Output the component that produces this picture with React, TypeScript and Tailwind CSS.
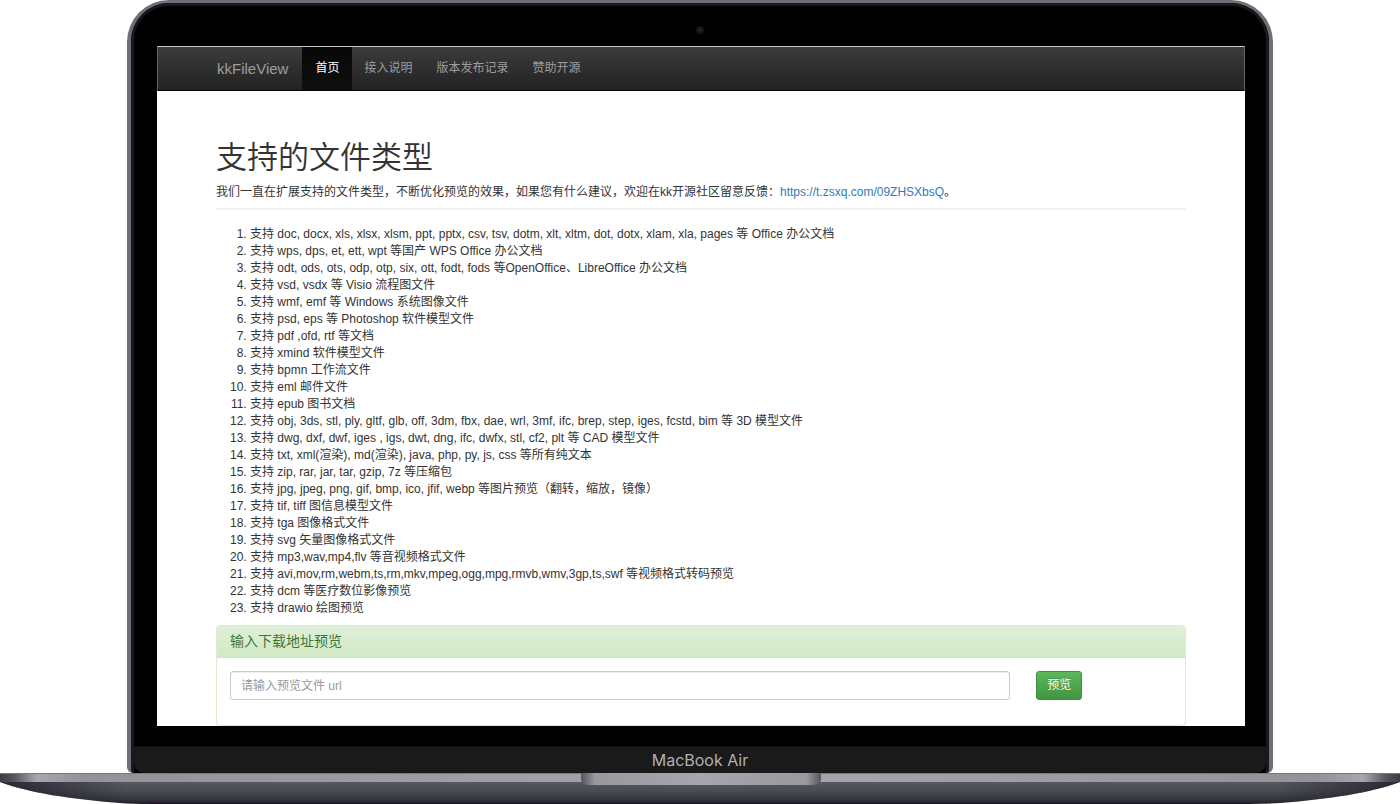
const navItems = ["首页", "接入说明", "版本发布记录", "赞助开源"];

const fileTypes = [
  "支持 doc, docx, xls, xlsx, xlsm, ppt, pptx, csv, tsv, dotm, xlt, xltm, dot, dotx, xlam, xla, pages 等 Office 办公文档",
  "支持 wps, dps, et, ett, wpt 等国产 WPS Office 办公文档",
  "支持 odt, ods, ots, odp, otp, six, ott, fodt, fods 等OpenOffice、LibreOffice 办公文档",
  "支持 vsd, vsdx 等 Visio 流程图文件",
  "支持 wmf, emf 等 Windows 系统图像文件",
  "支持 psd, eps 等 Photoshop 软件模型文件",
  "支持 pdf ,ofd, rtf 等文档",
  "支持 xmind 软件模型文件",
  "支持 bpmn 工作流文件",
  "支持 eml 邮件文件",
  "支持 epub 图书文档",
  "支持 obj, 3ds, stl, ply, gltf, glb, off, 3dm, fbx, dae, wrl, 3mf, ifc, brep, step, iges, fcstd, bim 等 3D 模型文件",
  "支持 dwg, dxf, dwf, iges , igs, dwt, dng, ifc, dwfx, stl, cf2, plt 等 CAD 模型文件",
  "支持 txt, xml(渲染), md(渲染), java, php, py, js, css 等所有纯文本",
  "支持 zip, rar, jar, tar, gzip, 7z 等压缩包",
  "支持 jpg, jpeg, png, gif, bmp, ico, jfif, webp 等图片预览（翻转，缩放，镜像）",
  "支持 tif, tiff 图信息模型文件",
  "支持 tga 图像格式文件",
  "支持 svg 矢量图像格式文件",
  "支持 mp3,wav,mp4,flv 等音视频格式文件",
  "支持 avi,mov,rm,webm,ts,rm,mkv,mpeg,ogg,mpg,rmvb,wmv,3gp,ts,swf 等视频格式转码预览",
  "支持 dcm 等医疗数位影像预览",
  "支持 drawio 绘图预览",
];

function Navbar() {
  return (
    <nav className="flex h-[45px] border border-t-[#c8c8c8] border-x-[#666666] border-b-[#080808] bg-linear-to-b from-[#3c3c3c] to-[#222222] pl-[59px] text-[#9d9d9d]">
      <a href="#home" className="flex items-center pr-[14px] text-[15px]">
        kkFileView
      </a>
      <ul className="flex">
        {navItems.map((item, i) => (
          <li key={item} className="flex">
            <a
              href={"#" + item}
              className={
                i === 0
                  ? "flex items-center bg-linear-to-b from-[#080808] to-[#0f0f0f] px-[13px] text-white"
                  : "flex items-center px-3"
              }
            >
              {item}
            </a>
          </li>
        ))}
      </ul>
    </nav>
  );
}

function PreviewPanel() {
  return (
    <section className="mt-2 rounded-[4px] border border-[#deebd2] shadow-[0_1px_2px_rgba(0,0,0,0.05)]">
      <h2 className="rounded-t-[3px] border-b border-[#d6e9c6] bg-linear-to-b from-[#dff0d8] to-[#d0e9c6] px-[13px] text-[14px] leading-[31px] text-[#3c763d]">
        输入下载地址预览
      </h2>
      <form className="flex gap-[26px] pt-[13px] pr-[15px] pb-[25px] pl-[13px]" onSubmit={(e) => e.preventDefault()}>
        <input
          type="text"
          aria-label="预览文件 url"
          placeholder="请输入预览文件 url"
          className="h-[29px] w-[83%] rounded-[3px] border border-[#cccccc] px-[10px] text-[12px] shadow-[inset_0_1px_1px_rgba(0,0,0,0.075)] outline-none placeholder:text-[#999999]"
        />
        <button
          type="submit"
          className="h-[29px] rounded-[3px] border border-[#3e8f3e] bg-linear-to-b from-[#5cb85c] to-[#419641] px-[10px] text-[12px] text-white [text-shadow:0_-1px_0_rgba(0,0,0,0.2)]"
        >
          预览
        </button>
      </form>
    </section>
  );
}

function LaptopBase() {
  return (
    <svg
      className="block h-[31px] w-full"
      viewBox="0 0 1400 31"
      preserveAspectRatio="none"
      aria-hidden="true"
    >
      <defs>
        <linearGradient id="edge" x1="0" x2="1" y1="0" y2="0">
          <stop offset="0" stopColor="#3c3d43" />
          <stop offset="0.01" stopColor="#55565c" />
          <stop offset="0.026" stopColor="#a6a7ac" />
          <stop offset="0.06" stopColor="#929398" />
          <stop offset="0.4" stopColor="#a0a1a6" />
          <stop offset="0.6" stopColor="#a3a4a9" />
          <stop offset="0.94" stopColor="#929398" />
          <stop offset="0.974" stopColor="#a6a7ac" />
          <stop offset="0.99" stopColor="#55565c" />
          <stop offset="1" stopColor="#3c3d43" />
        </linearGradient>
        <linearGradient id="belly" x1="0" x2="0" y1="0" y2="1">
          <stop offset="0" stopColor="#5a5b61" />
          <stop offset="0.45" stopColor="#494a52" />
          <stop offset="0.8" stopColor="#34353f" />
          <stop offset="1" stopColor="#1c1c27" />
        </linearGradient>
        <linearGradient id="corner" x1="0" x2="1" y1="0" y2="0">
          <stop offset="0" stopColor="#1c1d25" stopOpacity="0.8" />
          <stop offset="0.09" stopColor="#1c1d25" stopOpacity="0" />
          <stop offset="0.91" stopColor="#1c1d25" stopOpacity="0" />
          <stop offset="1" stopColor="#1c1d25" stopOpacity="0.8" />
        </linearGradient>
        <linearGradient id="notch" x1="0" x2="1" y1="0" y2="0">
          <stop offset="0" stopColor="#55565b" />
          <stop offset="0.06" stopColor="#999a9e" />
          <stop offset="0.5" stopColor="#a5a6ab" />
          <stop offset="0.94" stopColor="#999a9e" />
          <stop offset="1" stopColor="#55565b" />
        </linearGradient>
      </defs>
      <path d="M0 8H1400V9C1370 20 1330 26 1280 30Q1268 31 1250 31H150Q132 31 120 30C70 26 30 20 0 9Z" fill="url(#belly)" />
      <path d="M0 8H1400V9C1370 20 1330 26 1280 30Q1268 31 1250 31H150Q132 31 120 30C70 26 30 20 0 9Z" fill="url(#corner)" />
      <path d="M0 0H1400V9H0Z" fill="url(#edge)" />
      <path d="M0 0H1400V1H0Z" fill="#77787d" />
      <path d="M581 0H821V7Q820 12 811 12H591Q582 12 581 7Z" fill="url(#notch)" />
      <path d="M150 30H1250V31H150Z" fill="#1b111e" />
    </svg>
  );
}

export default function App() {
  return (
    <div className="bg-white font-['Liberation_Sans','Noto_Sans_CJK_SC',sans-serif] text-[12px] leading-[17px] text-[#333333]">
      <div className="mx-[127px] rounded-t-[42px] rounded-b-[6px] border-x-4 border-t-[3px] border-[#6d6e76] bg-black">
        <div className="rounded-t-[38px] rounded-b-[4px] border-x-[3px] border-t-[3px] border-[#17181a]">
          <div className="flex h-10 items-center justify-center pt-2">
            <span className="flex size-[8px] items-center justify-center rounded-full bg-[#151515]">
              <span className="size-[2px] rounded-full bg-[#30343a]" />
            </span>
          </div>
          <main className="mr-[21px] ml-[23px] bg-white">
            <Navbar />
            <div className="px-[59px] pt-[47px]">
              <header className="border-b-2 border-[#f3f3f3] pb-[7px]">
                <h1 className="text-[31px] leading-[40px] font-[350]">支持的文件类型</h1>
                <p className="mt-[6px]">
                  我们一直在扩展支持的文件类型，不断优化预览的效果，如果您有什么建议，欢迎在kk开源社区留意反馈：
                  <a href="https://t.zsxq.com/09ZHSXbsQ" className="text-[#337ab7]">
                    https://t.zsxq.com/09ZHSXbsQ
                  </a>
                  。
                </p>
              </header>
              <ol className="mt-4 list-decimal pl-[34px]">
                {fileTypes.map((text) => (
                  <li key={text}>{text}</li>
                ))}
              </ol>
              <PreviewPanel />
            </div>
          </main>
          <div className="h-5" />
          <div className="rounded-b-[10px] border-t border-[#101010] bg-[#1a1a1a] pt-1 pb-[3px] text-center font-[Inter,sans-serif] text-[16px] leading-[19px] text-[#b0b0b4]">
            MacBook Air
          </div>
        </div>
      </div>
      <LaptopBase />
    </div>
  );
}
